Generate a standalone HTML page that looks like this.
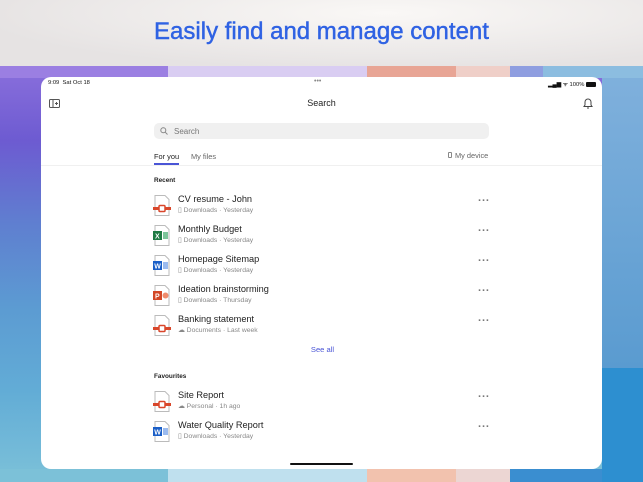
<!DOCTYPE html>
<html><head><style>
*{margin:0;padding:0;box-sizing:border-box}
body{width:643px;height:482px;overflow:hidden;font-family:"Liberation Sans",sans-serif;position:relative;background:#e9e6e6}
.top{position:absolute;left:0;top:0;width:643px;height:66px;background:radial-gradient(ellipse at 60% 20%,#faf8f6,#e6e3e3 75%)}
h1{position:absolute;top:18px;left:0;width:643px;text-align:center;font-weight:normal;font-size:24px;color:#2f62e3;-webkit-text-stroke:0.45px #2f62e3}
.bg{position:absolute;top:66px;left:0;width:643px;height:416px;
background:linear-gradient(180deg,#8a6fdc 0%,#6d5bd1 18%,#5f7fd0 38%,#5c9bd2 58%,#62acd6 78%,#7cc1d9 100%)}
.strip{position:absolute;top:66px;height:12px}
.bot{position:absolute;top:469px;height:13px}
.screen{position:absolute;left:41px;top:77px;width:561px;height:392px;background:#fff;border-radius:10px;overflow:hidden}
.abs{position:absolute}
.row{position:absolute;left:112px;width:340px;height:28px}
.name{position:absolute;left:25px;top:0px;font-size:9.2px;color:#222}
.sub{position:absolute;left:25px;top:12px;font-size:6.8px;color:#888}
.dots{position:absolute;left:437px;font-size:11px;color:#777;letter-spacing:0.3px;font-weight:bold}
.ic{position:absolute;left:0;top:1px;width:18px;height:21px}
</style></head><body>
<div class="top"></div>
<h1>Easily find and manage content</h1>
<div class="bg"></div>
<div class="strip" style="left:0;width:168px;background:#9b7fe2"></div>
<div class="strip" style="left:168px;width:199px;background:#d9cdf2"></div>
<div class="strip" style="left:367px;width:89px;background:#e8a595"></div>
<div class="strip" style="left:456px;width:54px;background:#efcfc8"></div>
<div class="strip" style="left:510px;width:33px;background:#8f9ee0"></div>
<div class="strip" style="left:543px;width:100px;background:#8cbde0"></div>
<div class="abs" style="left:602px;top:78px;width:41px;height:290px;background:linear-gradient(#7fb0dc,#5a9bd0)"></div>
<div class="abs" style="left:602px;top:368px;width:41px;height:114px;background:#2d8fd0"></div>
<div class="bot" style="left:0;width:168px;background:#7cc1d8"></div>
<div class="bot" style="left:168px;width:199px;background:#bfe0ee"></div>
<div class="bot" style="left:367px;width:89px;background:#f2c2ae"></div>
<div class="bot" style="left:456px;width:54px;background:#ecd6d3"></div>
<div class="bot" style="left:510px;width:92px;background:#3a8ed0"></div>
<div class="screen">
 <div class="abs" style="left:7px;top:3px;font-size:5.8px;color:#111">9:09&nbsp; Sat Oct 18</div>
 <div class="abs" style="left:273px;top:1px;font-size:7px;color:#888">•••</div>
 <div class="abs" style="left:507px;top:3px;font-size:5.8px;color:#111">▂▄▆ ᯤ 100% <span style="display:inline-block;width:10px;height:5px;background:#111;border-radius:1px;vertical-align:middle"></span></div>
 <svg class="abs" style="left:8px;top:22px" width="11" height="10" viewBox="0 0 11 10"><rect x=".5" y=".5" width="10" height="8" rx="1" fill="none" stroke="#555"/><line x1="4" y1="1" x2="4" y2="8" stroke="#555"/><path d="M6 4.5h3M7.5 3v3" stroke="#555"/></svg>
 <div class="abs" style="left:0;width:561px;top:21px;text-align:center;font-size:9px;color:#222">Search</div>
 <svg class="abs" style="left:542px;top:20px" width="10" height="12" viewBox="0 0 10 12"><path d="M2 8V5a3 3 0 0 1 6 0v3l1 1.5H1z" fill="none" stroke="#444"/><path d="M4 11h2" stroke="#444"/></svg>
 <div class="abs" style="left:113px;top:46px;width:335px;height:16px;background:#f0f0f0;border-radius:5px"></div>
 <svg class="abs" style="left:119px;top:50px" width="8" height="8" viewBox="0 0 8 8"><circle cx="3.3" cy="3.3" r="2.5" fill="none" stroke="#888"/><path d="M5.2 5.2L7.5 7.5" stroke="#888"/></svg>
 <div class="abs" style="left:133px;top:50px;font-size:8px;color:#777">Search</div>
 <div class="abs" style="left:113px;top:75px;font-size:7.4px;color:#222">For you</div>
 <div class="abs" style="left:113px;top:86px;width:25px;height:1.5px;background:#4a55d6"></div>
 <div class="abs" style="left:150px;top:75px;font-size:7.4px;color:#666">My files</div>
 <div class="abs" style="left:407px;top:74px;font-size:7.4px;color:#666"><span style="display:inline-block;width:4px;height:6px;border:1px solid #888;border-radius:1px;margin-right:3px"></span>My device</div>
 <div class="abs" style="left:0;top:88px;width:561px;height:1px;background:#f0f0f0"></div>
 <div class="abs" style="left:113px;top:100px;font-size:6.4px;color:#222;font-weight:bold">Recent</div>

 <div class="row" style="top:117px"><svg class="ic" viewBox="0 0 18 21"><path d="M2 .5h10l4 4v16H2z" fill="#fff" stroke="#bbb"/><rect x="0" y="12" width="18" height="3" fill="#d9472b"/><rect x="6" y="10.5" width="6" height="6" rx="1" fill="#fff" stroke="#d9472b" stroke-width="1.5"/></svg><div class="name">CV resume - John</div><div class="sub">▯ Downloads · Yesterday</div></div>
 <div class="row" style="top:147px"><svg class="ic" viewBox="0 0 18 21"><path d="M2 .5h10l4 4v16H2z" fill="#fff" stroke="#bbb"/><rect x="0" y="6" width="9" height="9" fill="#1e7a43"/><text x="2" y="13.5" font-size="7" fill="#fff" font-family="Liberation Sans" font-weight="bold">X</text><rect x="10" y="7" width="5" height="7" fill="#7cc59a"/></svg><div class="name">Monthly Budget</div><div class="sub">▯ Downloads · Yesterday</div></div>
 <div class="row" style="top:177px"><svg class="ic" viewBox="0 0 18 21"><path d="M2 .5h10l4 4v16H2z" fill="#fff" stroke="#bbb"/><rect x="0" y="6" width="9" height="9" fill="#1b5fc7"/><text x="1.2" y="13.5" font-size="7" fill="#fff" font-family="Liberation Sans" font-weight="bold">W</text><rect x="10" y="7" width="5" height="7" fill="#9bbbef"/></svg><div class="name">Homepage Sitemap</div><div class="sub">▯ Downloads · Yesterday</div></div>
 <div class="row" style="top:207px"><svg class="ic" viewBox="0 0 18 21"><path d="M2 .5h10l4 4v16H2z" fill="#fff" stroke="#bbb"/><rect x="0" y="6" width="9" height="9" fill="#d24726"/><text x="2" y="13.5" font-size="7" fill="#fff" font-family="Liberation Sans" font-weight="bold">P</text><circle cx="12.5" cy="10.5" r="3" fill="#f08b6c"/></svg><div class="name">Ideation brainstorming</div><div class="sub">▯ Downloads · Thursday</div></div>
 <div class="row" style="top:237px"><svg class="ic" viewBox="0 0 18 21"><path d="M2 .5h10l4 4v16H2z" fill="#fff" stroke="#bbb"/><rect x="0" y="12" width="18" height="3" fill="#d9472b"/><rect x="6" y="10.5" width="6" height="6" rx="1" fill="#fff" stroke="#d9472b" stroke-width="1.5"/></svg><div class="name">Banking statement</div><div class="sub">☁ Documents · Last week</div></div>
 <div class="dots" style="top:118px">···</div><div class="dots" style="top:148px">···</div><div class="dots" style="top:178px">···</div><div class="dots" style="top:208px">···</div><div class="dots" style="top:238px">···</div>
 <div class="abs" style="left:0;width:561px;top:268px;text-align:center;font-size:7.6px;color:#4a55d6"><span style="margin-left:2px">See all</span></div>
 <div class="abs" style="left:113px;top:296px;font-size:6.4px;color:#222;font-weight:bold">Favourites</div>
 <div class="row" style="top:313px"><svg class="ic" viewBox="0 0 18 21"><path d="M2 .5h10l4 4v16H2z" fill="#fff" stroke="#bbb"/><rect x="0" y="12" width="18" height="3" fill="#d9472b"/><rect x="6" y="10.5" width="6" height="6" rx="1" fill="#fff" stroke="#d9472b" stroke-width="1.5"/></svg><div class="name">Site Report</div><div class="sub">☁ Personal · 1h ago</div></div>
 <div class="row" style="top:343px"><svg class="ic" viewBox="0 0 18 21"><path d="M2 .5h10l4 4v16H2z" fill="#fff" stroke="#bbb"/><rect x="0" y="6" width="9" height="9" fill="#1b5fc7"/><text x="1.2" y="13.5" font-size="7" fill="#fff" font-family="Liberation Sans" font-weight="bold">W</text><rect x="10" y="7" width="5" height="7" fill="#9bbbef"/></svg><div class="name">Water Quality Report</div><div class="sub">▯ Downloads · Yesterday</div></div>
 <div class="dots" style="top:314px">···</div><div class="dots" style="top:344px">···</div>
 <div class="abs" style="left:249px;top:386px;width:63px;height:2px;background:#111;border-radius:1px"></div>
</div>
</body></html>
